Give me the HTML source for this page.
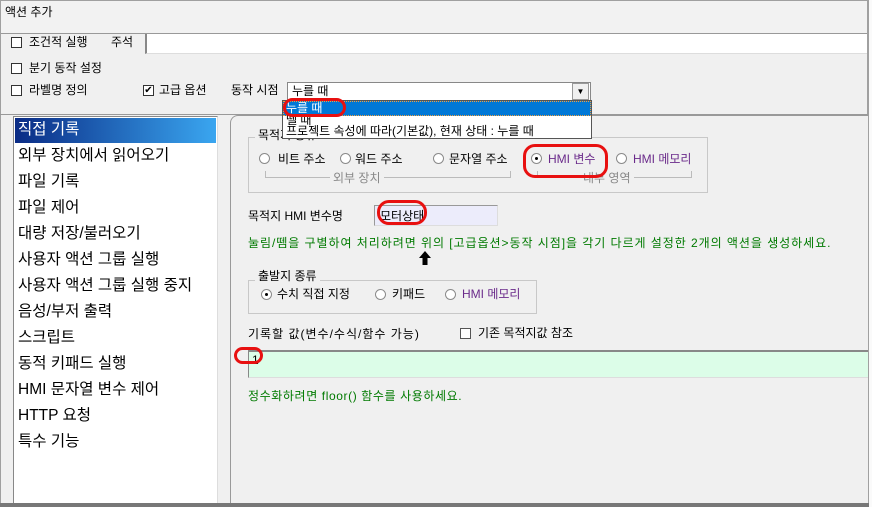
<!DOCTYPE html>
<html><head><meta charset="utf-8">
<style>
*{margin:0;padding:0;box-sizing:border-box}
html,body{width:872px;height:507px;overflow:hidden}
body{background:#f0f0f0;font-family:"Liberation Sans","Noto Sans CJK KR","NanumGothic",sans-serif;font-size:12px;color:#000;position:relative}
.a{position:absolute;white-space:nowrap;line-height:14px}
.cb{position:absolute;width:11px;height:11px;border:1px solid #333;background:#fff}
.rd{position:absolute;width:11px;height:11px;border-radius:50%;border:1px solid #8a8a8a;background:#fff}
.rd.on::after{content:"";position:absolute;left:3px;top:3px;width:3px;height:3px;background:#000;border-radius:50%}
.red{position:absolute;border:3px solid #e81010;border-radius:12px}
.li{position:absolute;left:18px;font-size:15.5px;height:26px;line-height:26px;white-space:nowrap}
.grp{position:absolute;border:1px solid #c8c8c8}
.purple{color:#6a2a8a}
.green{color:#007a00}
.gl{position:absolute;background:#f0f0f0;padding:0 3px;white-space:nowrap;line-height:14px}
</style></head><body>
<div class="a" style="left:0;top:0;width:869px;height:34px;background:#f2f2f2;border-top:1px solid #a0a0a0;border-left:1px solid #a0a0a0;border-bottom:1px solid #999"></div>
<div class="a" style="left:867px;top:0;width:2px;height:507px;background:#a0a0a0"></div>
<div class="a" style="left:869px;top:0;width:3px;height:507px;background:#fafafa"></div>
<div class="a" style="left:0;top:0;width:1px;height:507px;background:#a0a0a0"></div>
<div class="a" style="left:5px;top:5px">액션 추가</div>
<div class="a" style="left:145px;top:34px;width:722px;height:20px;background:#fff;border-left:2px solid #888;border-bottom:1px solid #ddd"></div>
<div class="cb" style="left:11px;top:37px"></div><div class="a" style="left:29px;top:35px">조건적 실행</div>
<div class="a" style="left:111px;top:35px">주석</div>
<div class="cb" style="left:11px;top:63px"></div><div class="a" style="left:29px;top:61px">분기 동작 설정</div>
<div class="cb" style="left:11px;top:85px"></div><div class="a" style="left:29px;top:83px">라벨명 정의</div>
<div class="cb" style="left:143px;top:85px;font-size:10px;line-height:9px;text-align:center">✔</div><div class="a" style="left:159px;top:83px">고급 옵션</div>
<div class="a" style="left:231px;top:83px">동작 시점</div>
<div class="a" style="left:287px;top:82px;width:304px;height:19px;background:#fff;border:1px solid #888"></div>
<div class="a" style="left:292px;top:84px">누를 때</div>
<div class="a" style="left:572px;top:83px;width:17px;height:17px;background:#f0f0f0;border:1px solid #999;font-size:8px;text-align:center;line-height:15px">▼</div>
<div class="a" style="left:0;top:114px;width:868px;height:1px;background:#999"></div>
<!-- list -->
<div class="a" style="left:13px;top:116px;width:205px;height:388px;background:#fff;border:1px solid #888;border-right-color:#ddd;border-bottom:none"></div>
<div class="a" style="left:15px;top:118px;width:201px;height:25px;background:linear-gradient(90deg,#0a2b85,#3aa6f0)"></div>
<div class="li" style="top:117px;color:#fff">직접 기록</div>
<div class="li" style="top:143px">외부 장치에서 읽어오기</div>
<div class="li" style="top:169px">파일 기록</div>
<div class="li" style="top:195px">파일 제어</div>
<div class="li" style="top:221px">대량 저장/불러오기</div>
<div class="li" style="top:247px">사용자 액션 그룹 실행</div>
<div class="li" style="top:273px">사용자 액션 그룹 실행 중지</div>
<div class="li" style="top:299px">음성/부저 출력</div>
<div class="li" style="top:325px">스크립트</div>
<div class="li" style="top:351px">동적 키패드 실행</div>
<div class="li" style="top:377px">HMI 문자열 변수 제어</div>
<div class="li" style="top:403px">HTTP 요청</div>
<div class="li" style="top:429px">특수 기능</div>
<!-- right panel -->
<div class="a" style="left:230px;top:115px;width:638px;height:388px;border:1px solid #999;border-right:none;border-bottom:none;border-radius:8px 0 0 0;background:#f0f0f0"></div>
<div class="grp" style="left:248px;top:137px;width:460px;height:56px"></div>
<div class="gl" style="left:255px;top:128px">목적지 종류</div>
<div class="rd" style="left:259px;top:153px"></div><div class="a" style="left:278px;top:152px">비트 주소</div>
<div class="rd" style="left:340px;top:153px"></div><div class="a" style="left:355px;top:152px">워드 주소</div>
<div class="rd" style="left:433px;top:153px"></div><div class="a" style="left:449px;top:152px">문자열 주소</div>
<div class="rd on" style="left:531px;top:153px"></div><div class="a purple" style="left:548px;top:152px">HMI 변수</div>
<div class="rd" style="left:616px;top:153px"></div><div class="a purple" style="left:633px;top:152px">HMI 메모리</div>
<div class="a" style="left:265px;top:171px;width:246px;height:7px;border:1px solid #bbb;border-top:none"></div>
<div class="gl" style="left:330px;top:171px;color:#888">외부 장치</div>
<div class="a" style="left:537px;top:171px;width:155px;height:7px;border:1px solid #bbb;border-top:none"></div>
<div class="gl" style="left:580px;top:171px;color:#888">내부 영역</div>
<div class="a" style="left:248px;top:209px">목적지 HMI 변수명</div>
<div class="a" style="left:374px;top:205px;width:124px;height:21px;background:#ececfb;border:1px solid #999;border-right-color:#ddd;border-bottom-color:#ddd"></div>
<div class="a" style="left:380px;top:209px">모터상태</div>
<div class="a green" style="left:248px;top:236px;letter-spacing:0.95px">눌림/뗌을 구별하여 처리하려면 위의 [고급옵션&gt;동작 시점]을 각기 다르게 설정한 2개의 액션을 생성하세요.</div>
<svg class="a" style="left:418px;top:250px" width="14" height="16"><path d="M7 1 L13 8 L9.5 8 L9.5 15 L4.5 15 L4.5 8 L1 8 Z" fill="#000"/></svg>
<div class="grp" style="left:248px;top:280px;width:289px;height:34px"></div>
<div class="gl" style="left:255px;top:269px">출발지 종류</div>
<div class="rd on" style="left:261px;top:289px"></div><div class="a" style="left:277px;top:287px">수치 직접 지정</div>
<div class="rd" style="left:375px;top:289px"></div><div class="a" style="left:392px;top:287px">키패드</div>
<div class="rd" style="left:445px;top:289px"></div><div class="a purple" style="left:462px;top:287px">HMI 메모리</div>
<div class="a" style="left:248px;top:327px;letter-spacing:1px">기록할 값(변수/수식/함수 가능)</div>
<div class="cb" style="left:460px;top:328px;border-color:#555"></div><div class="a" style="left:478px;top:326px">기존 목적지값 참조</div>
<div class="a" style="left:248px;top:350px;width:620px;height:28px;background:#dcfde8;border-top:2px solid #888;border-left:1px solid #888;border-bottom:1px solid #ddd"></div>
<div class="a" style="left:252px;top:353px">1</div>
<div class="a green" style="left:248px;top:389px;letter-spacing:0.6px">정수화하려면 floor() 함수를 사용하세요.</div>
<div class="a" style="left:0;top:503px;width:869px;height:4px;background:#777"></div>
<!-- dropdown list -->
<div class="a" style="left:282px;top:100px;width:310px;height:39px;background:#fff;border:1px solid #555"></div>
<div class="a" style="left:283px;top:101px;width:308px;height:15px;background:#0078d7;border:1px dotted #f0a040"></div>
<div class="a" style="left:286px;top:101px;color:#fff">누를 때</div>
<div class="a" style="left:286px;top:114px;line-height:12px">뗄 때</div>
<div class="a" style="left:286px;top:125px;line-height:13px">프로젝트 속성에 따라(기본값), 현재 상태 : 누를 때</div>
<!-- red highlights -->
<div class="red" style="left:283px;top:98px;width:63px;height:19px"></div>
<div class="red" style="left:523px;top:144px;width:85px;height:34px"></div>
<div class="red" style="left:377px;top:200px;width:50px;height:25px"></div>
<div class="red" style="left:234px;top:347px;width:29px;height:17px;border-radius:9px"></div>
</body></html>
